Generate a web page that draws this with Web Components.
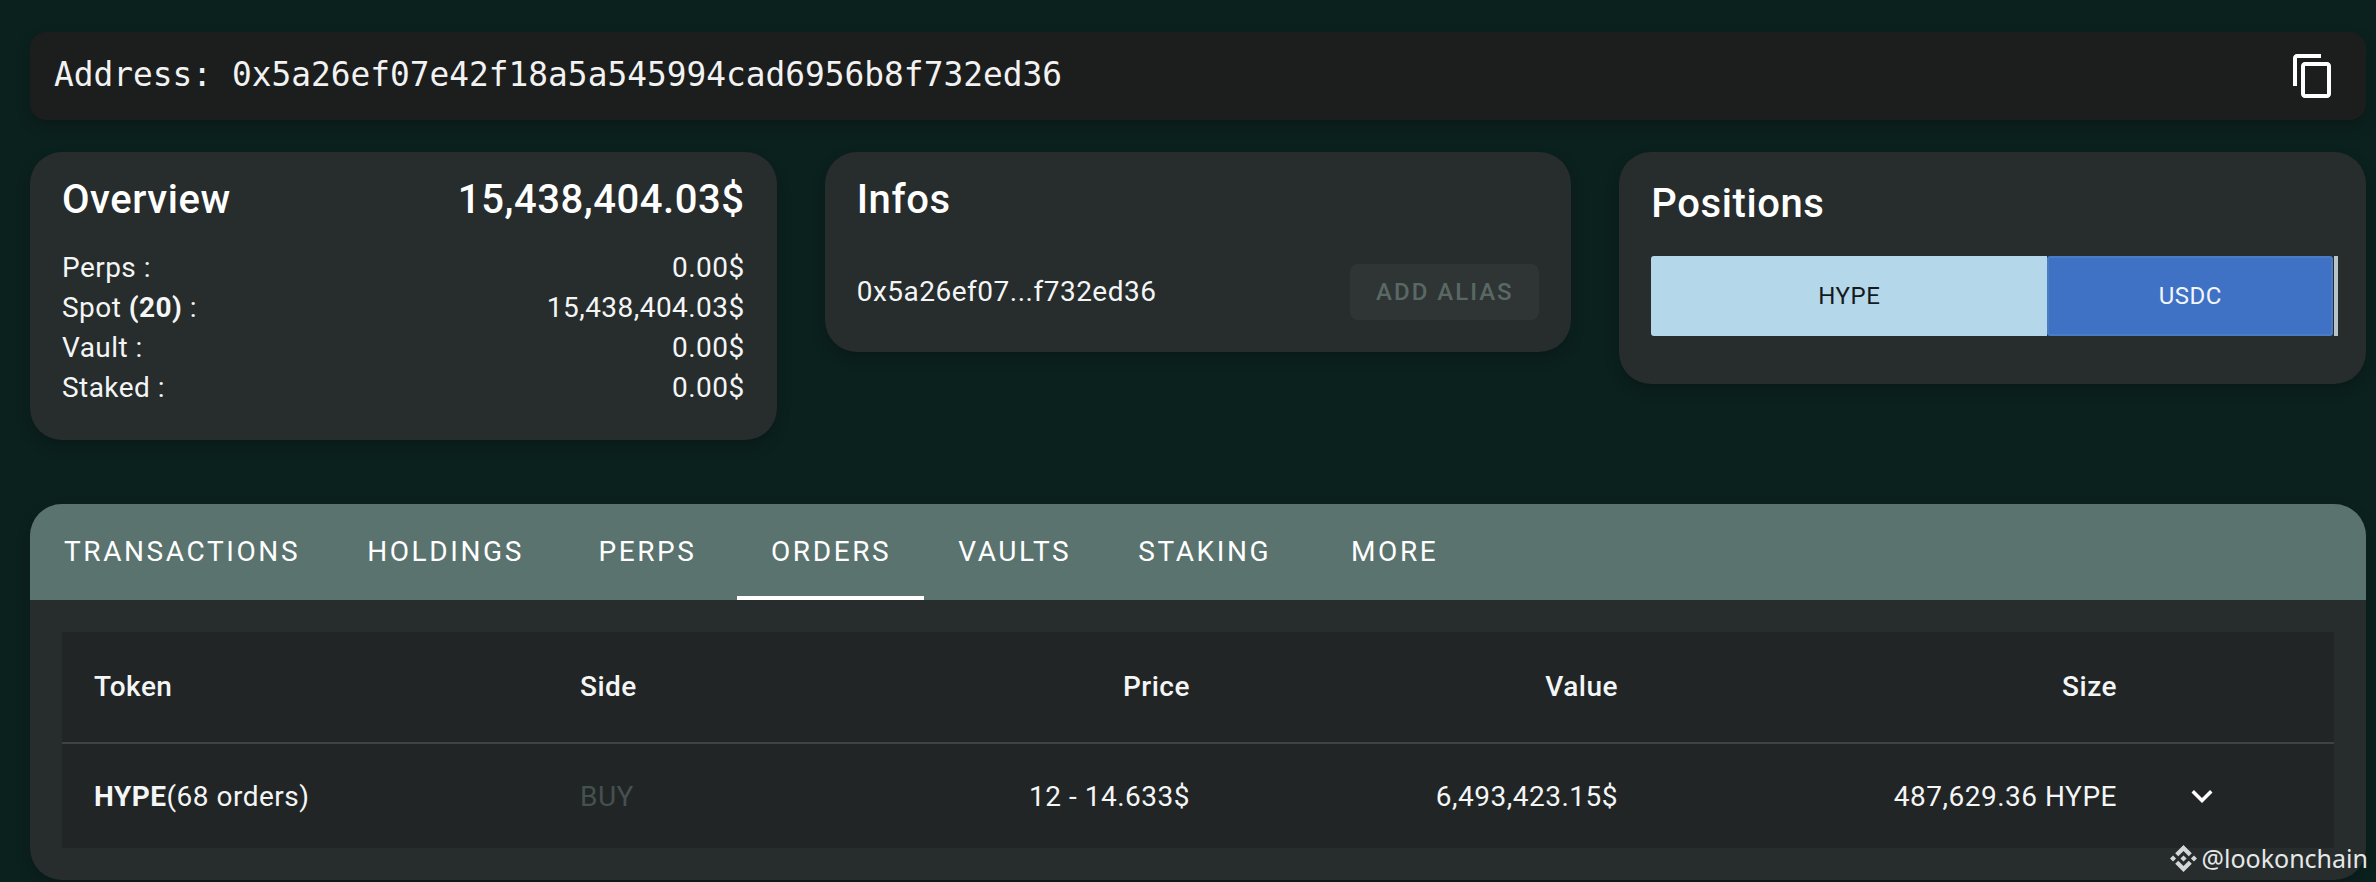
<!DOCTYPE html>
<html>
<head>
<meta charset="utf-8">
<title>Address</title>
<style>
    html, body { margin: 0; height: 100%; }
    body {
        background: #0b211e;
        color: #fff;
        font-family: Roboto, sans-serif;
        overflow: hidden;
    }
    .page {
        position: relative;
        box-sizing: border-box;
        height: 882px;
        padding: 32px 10px 0 30px;
        display: flex;
        flex-direction: column;
    }
    .cards {
        display: grid;
        grid-template-columns: repeat(3, 1fr);
        gap: 48px;
        align-items: start;
        margin-top: 32px;
    }
    tabs-panel { margin-top: 64px; }
</style>
</head>
<body>
<div class="page">
    <address-bar address="0x5a26ef07e42f18a5a545994cad6956b8f732ed36"></address-bar>
    <div class="cards">
        <overview-card total="15,438,404.03$"></overview-card>
        <infos-card address="0x5a26ef07...f732ed36"></infos-card>
        <positions-card></positions-card>
    </div>
    <tabs-panel></tabs-panel>
    <water-mark>@lookonchain</water-mark>
</div>

<script>
const CARD_SHADOW = "0 6px 14px rgba(0, 0, 0, 0.22)";

class AddressBar extends HTMLElement {
    connectedCallback() {
        this.attachShadow({ mode: "open" });
        this.shadowRoot.innerHTML = `
        <style>
            :host {
                display: flex;
                align-items: center;
                justify-content: space-between;
                height: 88px;
                box-sizing: border-box;
                padding: 0 29px 0 24px;
                background: #1c1e1d;
                border-radius: 16px;
                box-shadow: ${CARD_SHADOW};
            }
            span {
                font-family: "DejaVu Sans Mono", monospace;
                font-size: 32.85px;
                color: #f2f2f2;
                margin-top: -2px;
            }
            svg { display: block; width: 48px; height: 48px; }
        </style>
        <span>Address: ${this.getAttribute("address")}</span>
        <svg viewBox="0 0 24 24" fill="#fff"><path d="M16 1H4c-1.1 0-2 .9-2 2v14h2V3h12V1zm3 4H8c-1.1 0-2 .9-2 2v14c0 1.1.9 2 2 2h11c1.1 0 2-.9 2-2V7c0-1.1-.9-2-2-2zm0 16H8V7h11v14z"/></svg>
        `;
    }
}

class OverviewCard extends HTMLElement {
    connectedCallback() {
        const rows = [
            ["Perps :", "0.00$"],
            ["Spot <b>(20)</b> :", this.getAttribute("total")],
            ["Vault :", "0.00$"],
            ["Staked :", "0.00$"],
        ];
        this.attachShadow({ mode: "open" });
        this.shadowRoot.innerHTML = `
        <style>
            :host {
                display: block;
                box-sizing: border-box;
                height: 288px;
                padding: 25px 32px 0;
                background: #272c2d;
                border-radius: 32px;
                box-shadow: ${CARD_SHADOW};
            }
            .head {
                display: flex;
                justify-content: space-between;
                font-size: 40px;
                font-weight: 500;
                letter-spacing: 0.55px;
                line-height: 46px;
                margin-bottom: 25px;
            }
            .row {
                display: flex;
                justify-content: space-between;
                font-size: 28px;
                letter-spacing: 0.45px;
                line-height: 40px;
                color: #f4f5f5;
            }
            b { font-weight: 700; }
        </style>
        <div class="head"><span>Overview</span><span>${this.getAttribute("total")}</span></div>
        ${rows.map((r) => `<div class="row"><span>${r[0]}</span><span>${r[1]}</span></div>`).join("")}
        `;
    }
}

class InfosCard extends HTMLElement {
    connectedCallback() {
        this.attachShadow({ mode: "open" });
        this.shadowRoot.innerHTML = `
        <style>
            :host {
                display: block;
                box-sizing: border-box;
                height: 200px;
                padding: 25px 32px 0;
                background: #272c2d;
                border-radius: 32px;
                box-shadow: ${CARD_SHADOW};
            }
            h2 {
                margin: 0 0 41px;
                font-size: 40px;
                font-weight: 500;
                letter-spacing: 0.6px;
                line-height: 46px;
            }
            .row {
                display: flex;
                align-items: center;
                justify-content: space-between;
                font-size: 28px;
                letter-spacing: 0.5px;
                color: #f4f5f5;
            }
            .row span { margin-top: -2px; }
            button {
                width: 189px;
                height: 56px;
                padding: 0;
                border: none;
                border-radius: 8px;
                background: #2f3534;
                color: #5a6864;
                font: 500 24px Roboto, sans-serif;
                letter-spacing: 2px;
            }
        </style>
        <h2>Infos</h2>
        <div class="row"><span>${this.getAttribute("address")}</span><button>ADD ALIAS</button></div>
        `;
    }
}

class PositionsCard extends HTMLElement {
    connectedCallback() {
        this.attachShadow({ mode: "open" });
        this.shadowRoot.innerHTML = `
        <style>
            :host {
                display: block;
                box-sizing: border-box;
                height: 232px;
                padding: 29px 32px 0;
                background: #272c2d;
                border-radius: 32px;
                box-shadow: ${CARD_SHADOW};
            }
            h2 {
                margin: 0 0 29px;
                font-size: 40px;
                font-weight: 500;
                letter-spacing: 0.6px;
                line-height: 46px;
            }
            .bar {
                display: flex;
                height: 80px;
                font-size: 24px;
                letter-spacing: 0.5px;
                margin-right: -5px;
            }
            .bar div { display: flex; align-items: center; justify-content: center; box-sizing: border-box; }
            .hype { width: 396px; background: #b4d8ea; color: #151a1c; border-radius: 3px 0 0 3px; }
            .usdc { width: 286px; background: #3f71c4; border: 2px solid #4a7cc6; color: #f2f5fa; border-radius: 3px; }
            .rest { width: 5px; background: #b9c4c9; border-left: 1px solid #272c2d; }
        </style>
        <h2>Positions</h2>
        <div class="bar">
            <div class="hype">HYPE</div>
            <div class="usdc">USDC</div>
            <div class="rest"></div>
        </div>
        `;
    }
}

class TabsPanel extends HTMLElement {
    connectedCallback() {
        const tabs = ["Transactions", "Holdings", "Perps", "Orders", "Vaults", "Staking", "More"];
        this.attachShadow({ mode: "open" });
        this.shadowRoot.innerHTML = `
        <style>
            :host {
                display: block;
                height: 376px;
                background: #272c2d;
                border-radius: 32px;
                overflow: hidden;
                box-shadow: ${CARD_SHADOW};
            }
            nav {
                display: flex;
                height: 96px;
                background: #5a736e;
            }
            nav span {
                box-sizing: border-box;
                min-width: 180px;
                padding: 3px 33px 0 34px;
                display: flex;
                align-items: center;
                justify-content: center;
                font-size: 28px;
                font-weight: 400;
                letter-spacing: 2.6px;
                text-transform: uppercase;
                border-bottom: 4px solid transparent;
            }
            nav span.active { border-bottom-color: #fff; }
            .body { padding: 32px; }
        </style>
        <nav>${tabs.map((t) => `<span class="${t === "Orders" ? "active" : ""}">${t}</span>`).join("")}</nav>
        <div class="body"><orders-table></orders-table></div>
        `;
    }
}

class OrdersTable extends HTMLElement {
    connectedCallback() {
        this.attachShadow({ mode: "open" });
        this.shadowRoot.innerHTML = `
        <style>
            :host {
                display: grid;
                grid-template-columns: 486px 300px 374px 428px 499px 185px;
                background: #212526;
                font-size: 28px;
                letter-spacing: 0.5px;
            }
            div {
                display: flex;
                align-items: center;
                box-sizing: border-box;
                padding: 0 32px;
            }
            .h { height: 112px; padding-bottom: 2px; font-weight: 500; border-bottom: 2px solid #3e4344; color: #f4f5f5; }
            .c { height: 104px; color: #f4f5f5; }
            .r { justify-content: flex-end; }
            .buy { color: #44514e; }
            b { font-weight: 700; }
            svg { width: 42px; height: 42px; fill: #fff; }
        </style>
        <div class="h">Token</div><div class="h">Side</div><div class="h r">Price</div>
        <div class="h r">Value</div><div class="h r">Size</div><div class="h"></div>
        <div class="c"><b>HYPE</b>(68 orders)</div><div class="c buy">BUY</div><div class="c r">12 - 14.633$</div>
        <div class="c r">6,493,423.15$</div><div class="c r">487,629.36 HYPE</div>
        <div class="c"><svg viewBox="0 0 24 24"><path d="M7.41 8.59 12 13.17l4.59-4.58L18 10l-6 6-6-6z"/></svg></div>
        `;
    }
}

class WaterMark extends HTMLElement {
    connectedCallback() {
        this.attachShadow({ mode: "open" });
        this.shadowRoot.innerHTML = `
        <style>
            :host {
                position: absolute;
                right: 8px;
                bottom: 9px;
                display: flex;
                align-items: center;
                gap: 5px;
                font: 25px "Noto Sans", sans-serif;
                color: #e6e8e8;
                line-height: 30px;
            }
            svg { width: 27px; height: 27px; fill: #d4d7d7; }
        </style>
        <svg viewBox="0 0 126.6 126.6"><path d="M38.73 53.2l24.59-24.58 24.6 24.6 14.3-14.31L63.32 0 24.43 38.9zM0 63.31l14.3-14.31 14.31 14.31-14.31 14.3zM38.73 73.41l24.59 24.59 24.6-24.6 14.31 14.29-38.9 38.91-38.91-38.88zM98 63.31l14.3-14.31 14.31 14.3-14.31 14.32zM77.83 63.3L63.32 48.78 52.59 59.51l-1.24 1.23-2.54 2.54 14.51 14.5 14.51-14.47z"/></svg>
        <slot></slot>
        `;
    }
}

customElements.define("address-bar", AddressBar);
customElements.define("overview-card", OverviewCard);
customElements.define("infos-card", InfosCard);
customElements.define("positions-card", PositionsCard);
customElements.define("tabs-panel", TabsPanel);
customElements.define("orders-table", OrdersTable);
customElements.define("water-mark", WaterMark);
</script>
</body>
</html>
